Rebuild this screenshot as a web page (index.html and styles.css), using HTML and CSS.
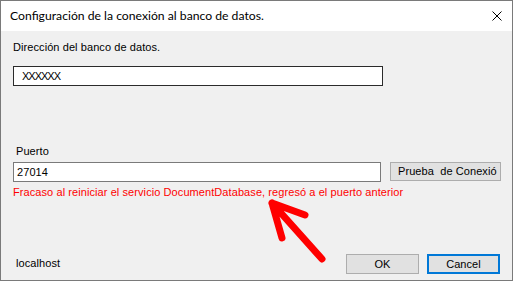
FILE: index.html
```html
<!DOCTYPE html>
<html lang="es">
<head>
<meta charset="utf-8">
<title>Configuración</title>
<link rel="stylesheet" href="styles.css">
</head>
<body>
<div class="window">
  <div class="titlebar">
    <span class="title">Configuración de la conexión al banco de datos.</span>
    <svg class="close" width="10" height="10" viewBox="0 0 10 10"><path d="M0.5 0.5 L9.5 9.5 M9.5 0.5 L0.5 9.5" stroke="#000" stroke-width="1" fill="none"/></svg>
  </div>
  <div class="client">
    <div class="label first">Dirección del banco de datos.</div>
    <div class="textbox addr">XXXXXX</div>
    <div class="label port-label">Puerto</div>
    <div class="port-row">
      <div class="textbox port">27014</div>
      <div class="button test">Prueba&nbsp; de Conexió</div>
    </div>
    <div class="error">Fracaso al reiniciar el servicio DocumentDatabase, regresó a el puerto anterior</div>
    <div class="footer">
      <span class="host">localhost</span>
      <div class="buttons">
        <div class="button ok">OK</div>
        <div class="button cancel">Cancel</div>
      </div>
    </div>
  </div>
  <svg class="arrow" width="70" height="70" viewBox="0 0 70 70">
    <path d="M7 8 L57 64 M7 8 L40 20 M7 8 L17 43" stroke="#ff0000" stroke-width="7" stroke-linecap="round" stroke-linejoin="round" fill="none"/>
  </svg>
</div>
</body>
</html>
```
FILE: styles.css
```css
html, body {
  margin: 0;
  padding: 0;
  background: #ffffff;
}
.window {
  position: relative;
  width: 511px;
  height: 279px;
  border: 1px solid #7a7a7a;
  display: flex;
  flex-direction: column;
  font-family: "Liberation Sans", Arial, sans-serif;
  font-size: 11px;
  letter-spacing: 0.08px;
  color: #000;
}
.titlebar {
  height: 30px;
  background: #ffffff;
  display: flex;
  align-items: center;
  padding: 0 10px 0 9px;
  justify-content: space-between;
}
.title {
  font-family: Lato, "Noto Sans", sans-serif;
  font-size: 12.2px;
  letter-spacing: 0;
  color: #000;
  margin-top: -1px;
}
.close {
  display: block;
}
.client {
  flex: 1;
  background: #f0f0f0;
  display: flex;
  flex-direction: column;
  padding: 0 11px 6px 12px;
}
.label {
  line-height: 13px;
}
.label.first {
  margin-top: 10px;
}
.textbox {
  box-sizing: border-box;
  height: 20px;
  background: #ffffff;
  line-height: 18px;
  padding-left: 3px;
}
.textbox.addr {
  margin-top: 12px;
  width: 370px;
  border: 1px solid #2b2b2b;
  padding-left: 8px;
  letter-spacing: -1px;
}
.port-label {
  margin-top: 59px;
  padding-left: 3px;
}
.port-row {
  margin-top: 4px;
  display: flex;
  gap: 9px;
  align-items: flex-start;
}
.textbox.port {
  width: 368px;
  border: 1px solid #7a7a7a;
}
.button {
  box-sizing: border-box;
  background: #e1e1e1;
  border: 1px solid #adadad;
  text-align: center;
  white-space: nowrap;
  overflow: hidden;
}
.button.test {
  width: 111px;
  height: 19px;
  line-height: 17px;
  text-align: left;
  padding-left: 7px;
}
.error {
  margin-top: 4px;
  color: #ff0000;
  line-height: 13px;
}
.footer {
  margin-top: auto;
  display: flex;
  justify-content: space-between;
  align-items: flex-end;
}
.host {
  padding-left: 3px;
  line-height: 13px;
  margin-bottom: 4px;
}
.buttons {
  display: flex;
  gap: 8px;
  margin-right: 1px;
}
.button.ok,
.button.cancel {
  width: 73px;
  height: 20px;
  line-height: 18px;
}
.button.cancel {
  border: 2px solid #0078d7;
  line-height: 16px;
}
.arrow {
  position: absolute;
  left: 264px;
  top: 194px;
}
```
